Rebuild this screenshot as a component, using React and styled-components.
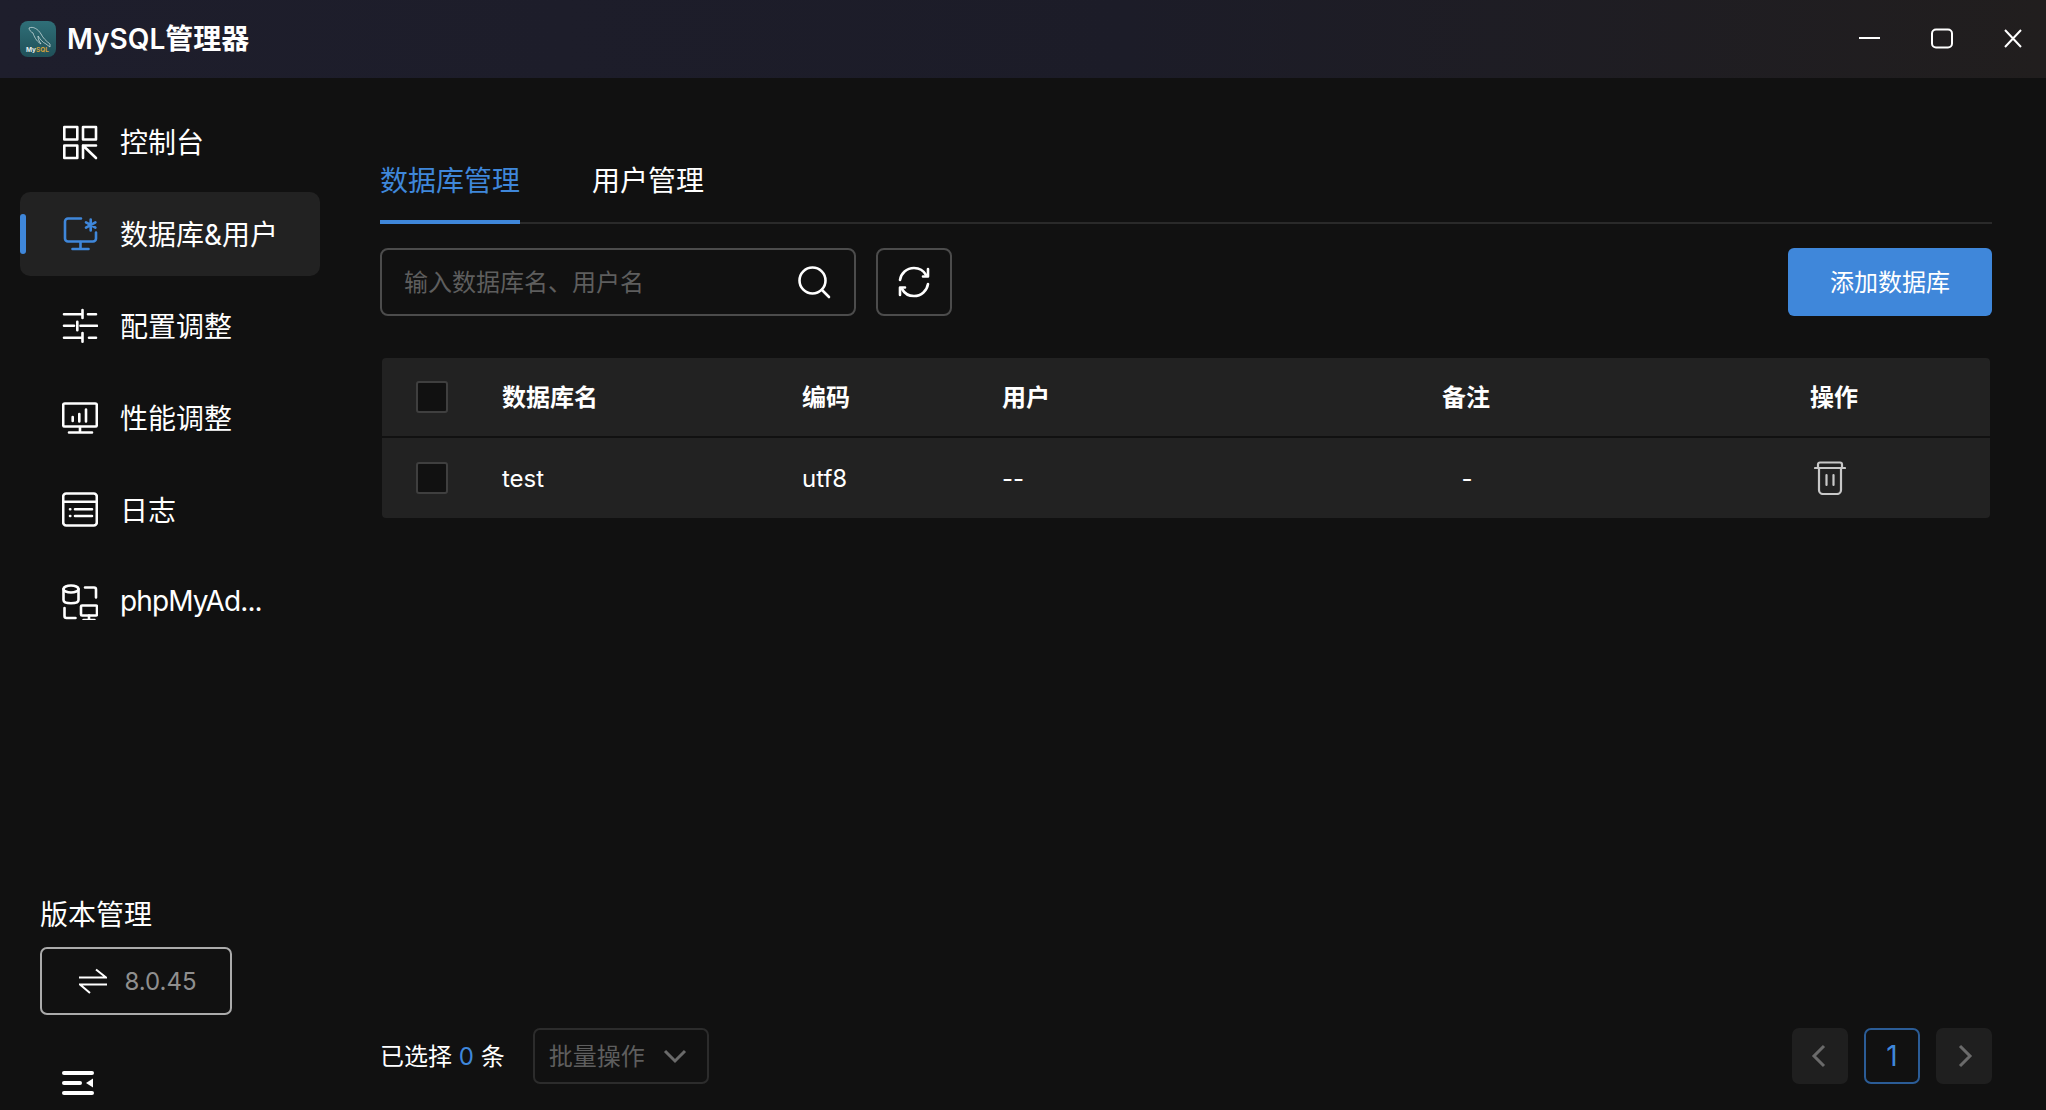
import styled, { createGlobalStyle } from "styled-components";

const GlobalStyle = createGlobalStyle`
  html, body, #root {
    margin: 0;
    height: 100%;
  }
  body {
    background: #111111;
    color: #fff;
    font-family: Inter, "Noto Sans CJK SC", sans-serif;
    overflow: hidden;
  }
  * {
    box-sizing: border-box;
  }
`;

const Page = styled.div`
  display: flex;
  flex-direction: column;
  height: 1110px;
`;

const TitleBar = styled.header`
  display: flex;
  align-items: center;
  height: 78px;
  padding-left: 20px;
  background: linear-gradient(90deg, #1e1e2c 0%, #1c1c28 55%, #211e1e 100%);
`;

const LogoBox = styled.div`
  width: 36px;
  height: 36px;
  border-radius: 8px;
  overflow: hidden;
  margin-right: 11px;
  background: linear-gradient(180deg, #2f6f78 0%, #205058 100%);
`;

const AppName = styled.span`
  font-size: 28px;
  font-weight: 600;
  line-height: 36px;
`;

const WindowControls = styled.div`
  display: flex;
  align-items: center;
  margin-left: auto;
  padding-right: 24px;
  gap: 51px;
`;

const WindowIcon = styled.svg`
  display: block;
  width: ${(p) => p.$size}px;
  height: 22px;
  fill: none;
  stroke: #fff;
  stroke-width: 2;
`;

const Body = styled.div`
  display: flex;
  flex: 1;
  min-height: 0;
`;

const Sidebar = styled.aside`
  display: flex;
  flex-direction: column;
  width: 380px;
  padding: 22px 0 0 20px;
`;

const NavList = styled.nav`
  display: flex;
  flex-direction: column;
  gap: 8px;
  width: 300px;
`;

const NavItem = styled.div`
  position: relative;
  display: flex;
  align-items: center;
  gap: 22px;
  height: 84px;
  padding-left: 42px;
  border-radius: 10px;
  font-size: 28px;
  background: ${(p) => (p.$active ? "#222222" : "transparent")};

  &::before {
    content: "";
    display: ${(p) => (p.$active ? "block" : "none")};
    position: absolute;
    left: 0;
    top: 22px;
    width: 6px;
    height: 40px;
    border-radius: 3px;
    background: #3f87da;
  }
`;

const NavLabel = styled.span`
  padding-bottom: 2px;
  white-space: nowrap;
  letter-spacing: ${(p) => (p.$tight ? "-0.9px" : "normal")};
`;

const NavIcon = styled.svg`
  flex: none;
  width: 36px;
  height: 36px;
  fill: none;
  stroke: ${(p) => (p.$active ? "#3f87da" : "#fff")};
  stroke-width: 2.6;
  stroke-linecap: round;
  stroke-linejoin: round;
`;

const VersionBlock = styled.div`
  margin-top: auto;
  padding-left: 20px;
`;

const VersionTitle = styled.div`
  font-size: 28px;
  line-height: 40px;
  margin-bottom: 12px;
`;

const VersionButton = styled.div`
  display: flex;
  align-items: center;
  justify-content: center;
  gap: 17px;
  width: 192px;
  height: 68px;
  padding-left: 4px;
  border: 2px solid #ababab;
  border-radius: 7px;
  font-size: 24px;
  color: #8f8f8f;
`;

const CollapseRow = styled.div`
  display: flex;
  height: 95px;
  padding: 55px 0 0 42px;
`;

const Main = styled.main`
  display: flex;
  flex-direction: column;
  flex: 1;
  padding-right: 54px;
`;

const Tabs = styled.div`
  display: flex;
  gap: 72px;
  height: 146px;
  padding-top: 64px;
  border-bottom: 2px solid #2a2a2a;
`;

const Tab = styled.div`
  position: relative;
  height: 82px;
  font-size: 28px;
  line-height: 78px;
  color: ${(p) => (p.$active ? "#3f87da" : "#fff")};

  &::after {
    content: "";
    display: ${(p) => (p.$active ? "block" : "none")};
    position: absolute;
    left: 0;
    right: 0;
    bottom: 0;
    height: 4px;
    background: #3f87da;
  }
`;

const Toolbar = styled.div`
  display: flex;
  align-items: center;
  gap: 20px;
  height: 68px;
  margin-top: 24px;
`;

const SearchBox = styled.div`
  display: flex;
  align-items: center;
  justify-content: space-between;
  width: 476px;
  height: 68px;
  padding: 0 23px 0 22px;
  border: 2px solid #4c4c4c;
  border-radius: 8px;
  font-size: 24px;
  color: #5e5e5e;
`;

const Placeholder = styled.span`
  padding-bottom: 3px;
`;

const ToolIcon = styled.svg`
  flex: none;
  width: 34px;
  height: 34px;
  fill: none;
  stroke: #fff;
  stroke-width: 2.6;
  stroke-linecap: round;
`;

const RefreshButton = styled.div`
  display: flex;
  align-items: center;
  justify-content: center;
  width: 76px;
  height: 68px;
  border: 2px solid #4c4c4c;
  border-radius: 8px;
`;

const PrimaryButton = styled.div`
  display: flex;
  align-items: center;
  justify-content: center;
  margin-left: auto;
  width: 204px;
  height: 68px;
  padding-bottom: 3px;
  border-radius: 6px;
  background: #3f87da;
  font-size: 24px;
`;

const Table = styled.div`
  margin: 42px 2px 0;
  display: flex;
  flex-direction: column;
  gap: 2px;
`;

const TableRow = styled.div`
  display: grid;
  grid-template-columns: 120px 300px 200px 240px 448px 1fr;
  align-items: center;
  height: ${(p) => (p.$head ? "78px" : "80px")};
  background: #222222;
  font-size: 24px;
  font-weight: ${(p) => (p.$head ? 600 : 400)};
  border-radius: ${(p) => (p.$head ? "4px 4px 0 0" : "0 0 4px 4px")};
`;

const Checkbox = styled.div`
  width: 32px;
  height: 32px;
  margin-left: 34px;
  background: #111111;
  border: 2px solid #3f3f3f;
  border-radius: 3px;
`;

const HeadCell = styled.div`
  padding-bottom: 3px;
  text-align: ${(p) => (p.$center ? "center" : "left")};
  padding-left: ${(p) => p.$left || 0}px;
`;

const CenterCell = styled.div`
  padding-left: 2px;
  text-align: center;
`;

const ActionCell = styled.div`
  padding-left: 124px;
`;

const TrashIcon = styled.svg`
  display: block;
  width: 32px;
  height: 34px;
  fill: none;
  stroke: #c8c8c8;
  stroke-width: 2.2;
  stroke-linecap: round;
`;

const Footer = styled.div`
  display: flex;
  align-items: center;
  margin-top: auto;
  height: 56px;
  margin-bottom: 26px;
  font-size: 24px;
`;

const SelectedText = styled.span`
  margin-right: 28px;
  padding-bottom: 3px;
  white-space: pre;
`;

const Count = styled.span`
  color: #3f87da;
`;

const BatchSelect = styled.div`
  display: flex;
  align-items: center;
  justify-content: space-between;
  width: 176px;
  height: 56px;
  padding: 0 20px 0 14px;
  border: 2px solid #2c2c2c;
  border-radius: 7px;
  color: #5e5e5e;
`;

const BatchLabel = styled.span`
  padding-bottom: 3px;
`;

const Pager = styled.div`
  display: flex;
  gap: 16px;
  margin-left: auto;
`;

const PageButton = styled.div`
  display: flex;
  align-items: center;
  justify-content: center;
  width: 56px;
  height: 56px;
  border-radius: 7px;
  background: ${(p) => (p.$current ? "transparent" : "#1f1f1f")};
  border: ${(p) => (p.$current ? "2px solid #2b5c96" : "none")};
  color: #3f87da;
  font-size: 28px;
`;

const Chevron = styled.svg`
  width: 24px;
  height: 24px;
  fill: none;
  stroke: #6a6a6a;
  stroke-width: 3;
`;

function MysqlLogo() {
  return (
    <svg viewBox="0 0 36 36" width="36" height="36">
      <path
        d="M9 7C13 5 18 8 21 13C23 17 26 20 30 23L30 26L26 23C22 21 20 18 18 15C18 18 19 20 21 23C16 20 14 15 13 12C11 11 9 9 9 7Z"
        fill="none"
        stroke="#dbe8e8"
        strokeWidth="0.7"
      />
      <text x="6" y="31" fontSize="6.500" fontWeight="700" fontFamily="Inter, sans-serif">
        <tspan fill="#e8eeee">My</tspan>
        <tspan fill="#d2a13a">SQL</tspan>
      </text>
    </svg>
  );
}

const navItems = [
  {
    label: "控制台",
    icon: (
      <>
        <rect x="2.300" y="3" width="13" height="12.500" />
        <rect x="21" y="3" width="13" height="12.500" />
        <rect x="2.300" y="21.500" width="13" height="12.500" />
        <path d="M21 34V21.500H34M21 21.500L34 34" />
      </>
    ),
  },
  {
    label: "数据库&用户",
    active: true,
    icon: (
      <>
        <path d="M19 2.500H6a3 3 0 0 0-3 3v17a3 3 0 0 0 3 3h25a3 3 0 0 0 3-3v-6" />
        <path d="M18.500 26v7M10.500 33h16" />
        <path d="M28.700 3.500v11M24 6.300l9.400 5.400M33.400 6.300L24 11.700" />
      </>
    ),
  },
  {
    label: "配置调整",
    icon: (
      <>
        <path d="M2 6.300h18.500M20.500 2v8M26 6.300h8" />
        <path d="M2 17.700H12M15.300 13.700v8.500M18.500 17.700h16.500" />
        <path d="M2 29.700H20.500M20.500 25v8.700M27 29.700h7" />
      </>
    ),
  },
  {
    label: "性能调整",
    icon: (
      <>
        <rect x="1.200" y="3.500" width="33.600" height="23" rx="1.500" />
        <path d="M18 27v5M7 32.500h23" />
        <path d="M10.700 17v4M17.300 14v7.500M24 9.500v12" />
      </>
    ),
  },
  {
    label: "日志",
    icon: (
      <>
        <rect x="1.200" y="1.500" width="33.600" height="32" rx="3" />
        <path d="M1.200 9.700h33.600M8 17.300h.3M8 24h.3M13 17.300h17M13 24h17" />
      </>
    ),
  },
  {
    label: "phpMyAd...",
    tight: true,
    icon: (
      <>
        <ellipse cx="9" cy="5" rx="7.500" ry="3.500" />
        <path d="M1.500 5v11c0 2 3.400 3.200 7.500 3.200s7.500-1.200 7.500-3.200V5" />
        <path d="M23 3.500h9a2 2 0 0 1 2 2v8M2.500 24v8a2 2 0 0 0 2 2h9" />
        <rect x="19" y="21.500" width="16" height="10" rx="1" />
        <path d="M27 31.500v4M21.500 36h11" />
      </>
    ),
  },
];

export default function App() {
  return (
    <Page>
      <GlobalStyle />
      <TitleBar>
        <LogoBox>
          <MysqlLogo />
        </LogoBox>
        <AppName>MySQL管理器</AppName>
        <WindowControls>
          <WindowIcon $size={21} viewBox="0 0 21 22">
            <path d="M0 10h21" />
          </WindowIcon>
          <WindowIcon $size={22} viewBox="0 0 22 22">
            <rect x="1" y="1.500" width="20" height="18" rx="4" />
          </WindowIcon>
          <WindowIcon $size={18} viewBox="0 0 18 22">
            <path d="M1 2l16 17M17 2L1 19" />
          </WindowIcon>
        </WindowControls>
      </TitleBar>
      <Body>
        <Sidebar>
          <NavList>
            {navItems.map((item) => (
              <NavItem key={item.label} $active={item.active}>
                <NavIcon viewBox="0 0 36 36" $active={item.active}>
                  {item.icon}
                </NavIcon>
                <NavLabel $tight={item.tight}>{item.label}</NavLabel>
              </NavItem>
            ))}
          </NavList>
          <VersionBlock>
            <VersionTitle>版本管理</VersionTitle>
            <VersionButton>
              <svg viewBox="0 0 28 26" width="28" height="26" fill="none" stroke="#fff" strokeWidth="2">
                <path d="M0 9.500h27L17 1.500M28 16.500H1l10 8.500" />
              </svg>
              <span>8.0.45</span>
            </VersionButton>
          </VersionBlock>
          <CollapseRow>
            <svg viewBox="0 0 32 26" width="32" height="26" fill="#fff">
              <rect x="0" y="1" width="32" height="4" rx="2" />
              <rect x="0" y="11" width="20" height="4" rx="2" />
              <rect x="0" y="21" width="32" height="4" rx="2" />
              <path d="M24 13l7-4.500v9z" />
            </svg>
          </CollapseRow>
        </Sidebar>
        <Main>
          <Tabs>
            <Tab $active>数据库管理</Tab>
            <Tab>用户管理</Tab>
          </Tabs>
          <Toolbar>
            <SearchBox>
              <Placeholder>输入数据库名、用户名</Placeholder>
              <ToolIcon viewBox="0 0 34 34">
                <circle cx="15.500" cy="15.500" r="13" />
                <path d="M25 25l7 7" />
              </ToolIcon>
            </SearchBox>
            <RefreshButton>
              <ToolIcon viewBox="0 0 34 34">
                <path d="M3 15C4 8.500 9.500 3 17 3c5 0 9.500 2.500 12 7" />
                <path d="M31 19c-1 6.500-6.500 12-14 12-5 0-9.500-2.500-12-7" />
                <path d="M31 4v7.500h-5" strokeLinejoin="round" />
                <path d="M3 30v-7.500h5" strokeLinejoin="round" />
              </ToolIcon>
            </RefreshButton>
            <PrimaryButton>添加数据库</PrimaryButton>
          </Toolbar>
          <Table>
            <TableRow $head>
              <Checkbox />
              <HeadCell>数据库名</HeadCell>
              <HeadCell>编码</HeadCell>
              <HeadCell>用户</HeadCell>
              <HeadCell $center>备注</HeadCell>
              <HeadCell $left={120}>操作</HeadCell>
            </TableRow>
            <TableRow>
              <Checkbox />
              <div>test</div>
              <div>utf8</div>
              <div>--</div>
              <CenterCell>-</CenterCell>
              <ActionCell>
                <TrashIcon viewBox="0 0 32 34">
                  <path d="M1 7h30M6 1.500h20M6 1.500a2 2 0 0 0-2 2V7M26 1.500a2 2 0 0 1 2 2V7" />
                  <path d="M5 7v22a4 4 0 0 0 4 4h14a4 4 0 0 0 4-4V7" />
                  <path d="M12.500 14v10M19.500 14v10" />
                </TrashIcon>
              </ActionCell>
            </TableRow>
          </Table>
          <Footer>
            <SelectedText>
              已选择 <Count>0</Count> 条
            </SelectedText>
            <BatchSelect>
              <BatchLabel>批量操作</BatchLabel>
              <Chevron viewBox="0 0 24 24">
                <path d="M2 7l10 10L22 7" />
              </Chevron>
            </BatchSelect>
            <Pager>
              <PageButton>
                <Chevron viewBox="0 0 24 24">
                  <path d="M16 2L6 12l10 10" />
                </Chevron>
              </PageButton>
              <PageButton $current>1</PageButton>
              <PageButton>
                <Chevron viewBox="0 0 24 24">
                  <path d="M8 2l10 10L8 22" />
                </Chevron>
              </PageButton>
            </Pager>
          </Footer>
        </Main>
      </Body>
    </Page>
  );
}
